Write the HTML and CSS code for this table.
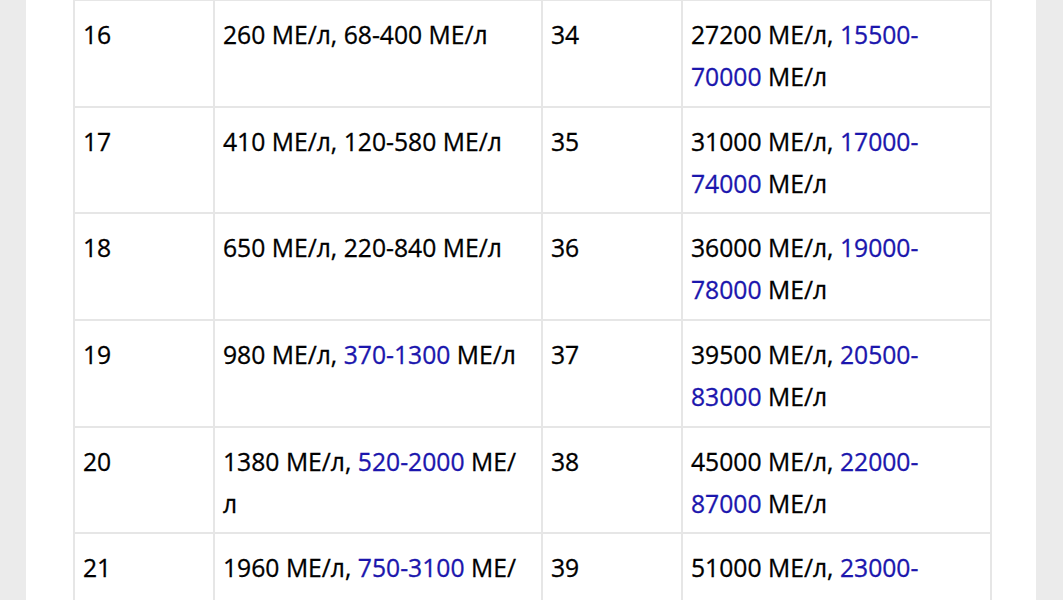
FILE: index.html
```html
<!DOCTYPE html>
<html lang="ru">
<head>
<meta charset="utf-8">
<link rel="stylesheet" href="styles.css">
</head>
<body>
<main class="page">
  <table class="hcg">
    <colgroup>
      <col class="c-week"><col class="c-val"><col class="c-week"><col class="c-val2">
    </colgroup>
    <tbody>
      <tr><td>16</td><td>260 МЕ/л, 68-400 МЕ/л</td><td>34</td><td>27200 МЕ/л, <a href="#">15500-70000</a> МЕ/л</td></tr>
      <tr><td>17</td><td>410 МЕ/л, 120-580 МЕ/л</td><td>35</td><td>31000 МЕ/л, <a href="#">17000-74000</a> МЕ/л</td></tr>
      <tr><td>18</td><td>650 МЕ/л, 220-840 МЕ/л</td><td>36</td><td>36000 МЕ/л, <a href="#">19000-78000</a> МЕ/л</td></tr>
      <tr><td>19</td><td>980 МЕ/л, <a href="#">370-1300</a> МЕ/л</td><td>37</td><td>39500 МЕ/л, <a href="#">20500-83000</a> МЕ/л</td></tr>
      <tr><td>20</td><td>1380 МЕ/л, <a href="#">520-2000</a> МЕ/л</td><td>38</td><td>45000 МЕ/л, <a href="#">22000-87000</a> МЕ/л</td></tr>
      <tr><td>21</td><td>1960 МЕ/л, <a href="#">750-3100</a> МЕ/л</td><td>39</td><td>51000 МЕ/л, <a href="#">23000-93000</a> МЕ/л</td></tr>
    </tbody>
  </table>
</main>
</body>
</html>
```
FILE: styles.css
```css
html, body {
  margin: 0;
  padding: 0;
  background: #ebebeb;
  height: 100%;
  overflow: hidden;
}
.page {
  margin: 0 27px 0 26px;
  background: #ffffff;
  min-height: 100%;
  padding: 0 46px 0 47px;
}
.hcg {
  border-collapse: collapse;
  table-layout: fixed;
  width: 918px;
  margin-top: -1px;
  font-family: "Open Sans", "Noto Sans", sans-serif;
  font-size: 24.7px;
  line-height: 42px;
  color: #000;
  -webkit-text-stroke: 0.3px currentColor;
}
.c-week { width: 140px; }
.c-val { width: 328px; }
.c-val2 { width: 309px; }
.hcg td {
  border: 2px solid #e6e6e6;
  padding: 13px 12px 7.67px 8px;
  vertical-align: top;
  height: 84px;
}
.hcg a {
  color: #1b16ad;
  text-decoration: none;
}
```
